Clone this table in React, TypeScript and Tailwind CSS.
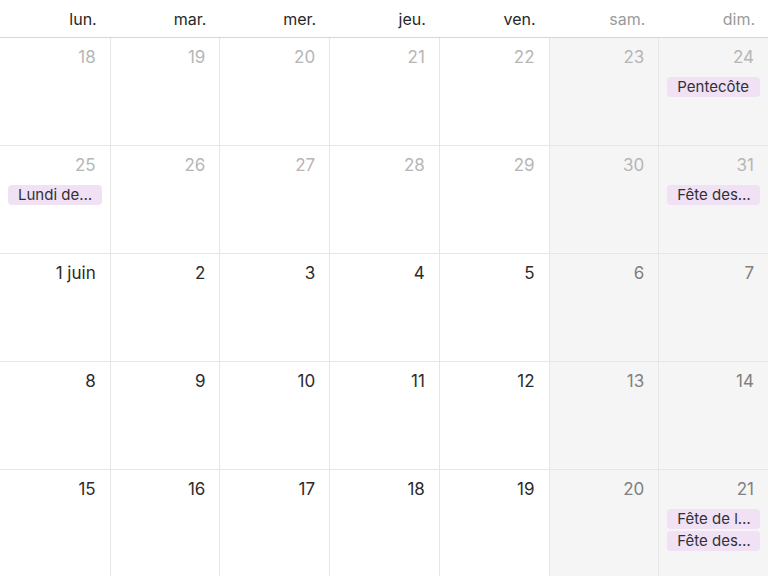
const days = ['lun.', 'mar.', 'mer.', 'jeu.', 'ven.', 'sam.', 'dim.'];

type Cell = { label: string; past?: boolean; events?: string[] };

const weeks: Cell[][] = [
  [
    { label: '18', past: true },
    { label: '19', past: true },
    { label: '20', past: true },
    { label: '21', past: true },
    { label: '22', past: true },
    { label: '23', past: true },
    { label: '24', past: true, events: ['Pentecôte'] },
  ],
  [
    { label: '25', past: true, events: ['Lundi de…'] },
    { label: '26', past: true },
    { label: '27', past: true },
    { label: '28', past: true },
    { label: '29', past: true },
    { label: '30', past: true },
    { label: '31', past: true, events: ['Fête des…'] },
  ],
  [
    { label: '1 juin' },
    { label: '2' },
    { label: '3' },
    { label: '4' },
    { label: '5' },
    { label: '6' },
    { label: '7' },
  ],
  [
    { label: '8' },
    { label: '9' },
    { label: '10' },
    { label: '11' },
    { label: '12' },
    { label: '13' },
    { label: '14' },
  ],
  [
    { label: '15' },
    { label: '16' },
    { label: '17' },
    { label: '18' },
    { label: '19' },
    { label: '20' },
    { label: '21', events: ['Fête de l…', 'Fête des…'] },
  ],
];

function DayCell({ cell, col }: { cell: Cell; col: number }) {
  const weekend = col >= 5;
  let color = 'text-[#2b2b2b]';
  if (cell.past) color = 'text-[#b6b6b6]';
  else if (weekend) color = 'text-[#808080]';

  return (
    <div
      className={`flex flex-col items-end pt-[7px] ${col > 0 ? 'border-l border-[#e6e6e6]' : ''} ${
        weekend ? 'bg-[#f5f5f5]' : 'bg-white'
      }`}
    >
      <span className={`pr-[14px] text-[17px] leading-6 ${color}`}>{cell.label}</span>
      {cell.events && (
        <div className="mt-[8px] flex flex-col gap-[2px] self-stretch px-2">
          {cell.events.map((ev) => (
            <div
              key={ev}
              className="h-5 rounded-[4px] bg-[#f0e1f5] px-[10px] text-[15px] leading-5 text-[#333035] whitespace-nowrap overflow-hidden"
            >
              {ev}
            </div>
          ))}
        </div>
      )}
    </div>
  );
}

export default function App() {
  return (
    <div className="h-[576px] w-[768px] overflow-hidden bg-white font-['Inter',sans-serif]">
      <div className="grid h-[38px] grid-cols-7 border-b border-[#d6d6d6]">
        {days.map((d, i) => (
          <div
            key={d}
            className={`flex items-center justify-end pr-[13px] text-[16px] ${
              i >= 5 ? 'text-[#9a9a9a]' : 'text-[#282828]'
            }`}
          >
            {d}
          </div>
        ))}
      </div>
      {weeks.map((week, r) => (
        <div key={r} className="grid h-[108px] grid-cols-7 border-b border-[#e6e6e6]">
          {week.map((cell, c) => (
            <DayCell key={c} cell={cell} col={c} />
          ))}
        </div>
      ))}
    </div>
  );
}
